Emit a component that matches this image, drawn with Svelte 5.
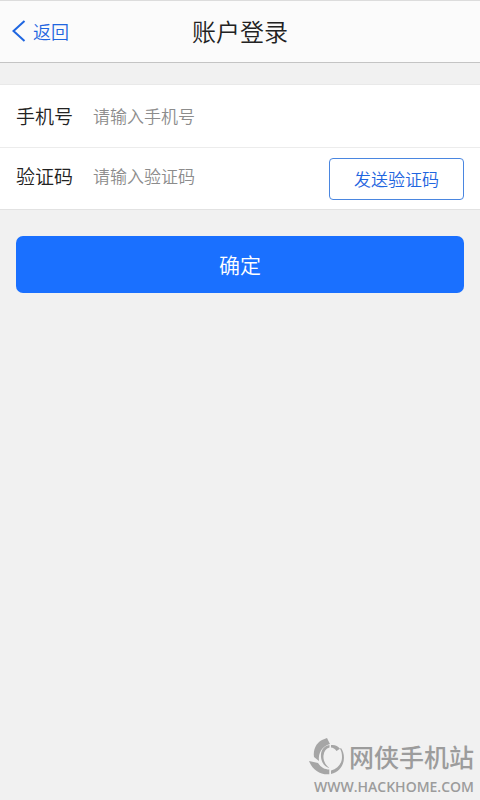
<script>
  let phone = $state('');
  let code = $state('');
</script>

<div class="page">
  <header>
    <a class="back" href="#back">
      <svg viewBox="0 0 14 22" width="14" height="22" aria-hidden="true">
        <path d="M12.5 1 L1.5 11 L12.5 21" />
      </svg>
      <span>返回</span>
    </a>
    <h1>账户登录</h1>
  </header>

  <form onsubmit={(e) => e.preventDefault()}>
    <div class="fields">
      <div class="row">
        <label for="phone">手机号</label>
        <input id="phone" type="tel" placeholder="请输入手机号" bind:value={phone} />
      </div>
      <div class="row verify">
        <label for="code">验证码</label>
        <input id="code" type="text" placeholder="请输入验证码" bind:value={code} />
        <button class="send" type="button">发送验证码</button>
      </div>
    </div>
    <button class="confirm" type="submit">确定</button>
  </form>

  <footer>
    <div class="brand">
      <svg viewBox="0 0 36 38" width="36" height="38" aria-hidden="true">
        <path d="M13 3 L18 1 L21 7 C13 9 9 16 10 24 L5 20 C4 13 7 6 13 3 Z" />
        <path d="M0 24 L9 26 C12 30.5 16 32.5 20.3 32.5 V37.3 C11 38 3.5 33 0 24 Z" />
        <path d="M22 37 V33.5 C29 31.5 33 26.5 33 20 C33 16.5 32.3 14 31 11.8 L32 11 C38 19.5 35 34 22 37 Z" />
        <path d="M20.5 8 C14 9 11.5 14.5 12 20 C12.5 26 16 30 20.5 31 C16.5 28 14 24 14.5 18.5 C15 14 17 11.5 20.5 10.5 Z" />
        <path d="M22 8 C26 7.5 29 9 31 11.8 L27.5 14 C26 12 24 10.5 22 10.5 Z" />
      </svg>
      <span>网侠手机站</span>
    </div>
    <div class="site">WWW.HACKHOME.COM</div>
  </footer>
</div>

<style>
  :global(body) { background: #f1f1f1; }
  .page { display: flex; flex-direction: column; min-height: 100vh; font-family: "Noto Sans CJK SC", sans-serif; font-weight: 350; color: #222; background: #f1f1f1; }
  header { display: grid; grid-template-columns: 1fr auto 1fr; align-items: center; height: 63px; box-sizing: border-box; padding: 0 12px 2px; background: #fbfbfb; border-top: 1px solid #dcdcdc; border-bottom: 1px solid #c4c4c4; }
  .back { display: flex; align-items: center; gap: 7px; font-size: 18px; line-height: 26px; color: #1f66e0; text-decoration: none; }
  .back svg { fill: none; stroke: #1f66e0; stroke-width: 2; }
  h1 { margin: 0; font-size: 24px; line-height: 36px; font-weight: 350; }
  .fields { margin-top: 21px; background: #fff; border-top: 1px solid #e9e9e9; border-bottom: 1px solid #e2e2e2; }
  .row { display: flex; align-items: center; height: 62px; box-sizing: border-box; padding: 0 16px; line-height: 28px; }
  .row + .row { border-top: 1px solid #ececec; }
  .verify { align-items: flex-start; padding-top: 10px; line-height: 36px; }
  label { width: 77px; font-size: 19px; }
  input { flex: 1; min-width: 0; padding: 0; border: 0; outline: 0; background: none; font: inherit; font-size: 17px; color: #222; }
  input::placeholder { color: #8c8c8c; opacity: 1; }
  button { font-family: inherit; font-weight: inherit; cursor: pointer; }
  .send { height: 42px; padding: 0 24px 2px; border: 1px solid #4a86e0; border-radius: 4px; background: #fff; font-size: 17px; color: #1f66e0; }
  form { padding-bottom: 24px; }
  .confirm { display: block; width: calc(100% - 32px); height: 57px; margin: 26px 16px 0; padding: 0 0 2px; border: 0; border-radius: 7px; background: #1a70ff; font-size: 21px; color: #fff; }
  footer { display: flex; flex-direction: column; align-items: flex-end; margin-top: auto; padding: 0 6px 1px 0; color: #9c9c9c; }
  .brand { display: flex; align-items: center; gap: 4px; font-size: 25px; line-height: 38px; font-weight: 500; }
  .brand svg { fill: #a6a6a6; }
  .site { font-family: "Open Sans", sans-serif; font-size: 14px; line-height: 24px; font-weight: 600; }
</style>
